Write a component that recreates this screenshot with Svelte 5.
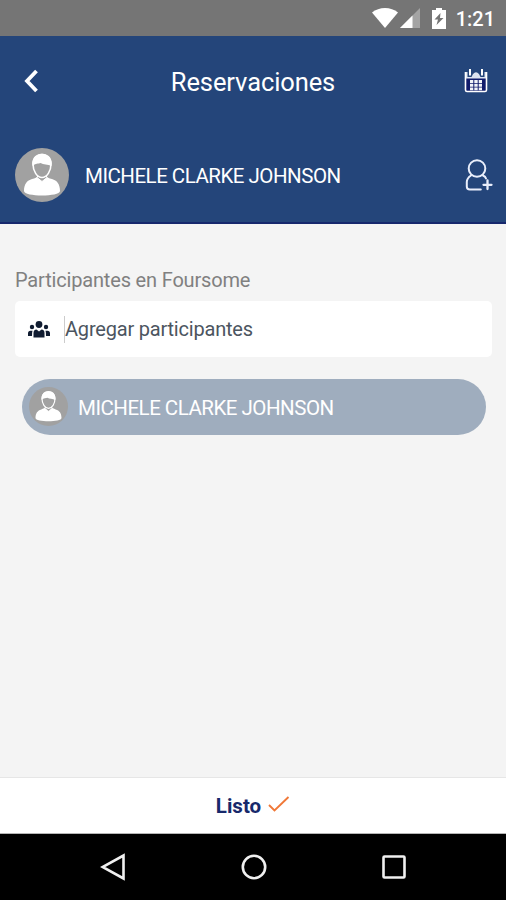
<script lang="ts">
  let title = 'Reservaciones'
  let user = 'MICHELE CLARKE JOHNSON'
  let participants = $state([user])
</script>

{#snippet avatar()}
  <svg class="avatar" viewBox="0 0 54 54">
    <circle cx="27" cy="27" r="27" fill="#a1a1a1" />
    <path d="M9 43c0-7 3-10.500 8-12 3-.8 5-1.500 6.500-3.500h7c1.500 2 3.500 2.700 6.500 3.500 5 1.500 8 5 8 12 0 6-36 6-36 0z" fill="#fff" />
    <path d="M23.500 26.500l-1.500 3 5 4 5-4-1.500-3z" fill="#a1a1a1" stroke="#fff" stroke-width="1" />
    <path d="M18 16c0-13 18-13 18 0 0 7-4 13.500-9 13.500S18 23 18 16z" fill="#a1a1a1" stroke="#fff" stroke-width="1.600" />
    <path d="M17.500 18C15 2 39 2 36.500 18c-4-2-8-1-11-3-2 1-5 0-8 3z" fill="#fff" />
  </svg>
{/snippet}

<div class="screen">
  <div class="status">
    <svg class="wifi" width="26" height="20" viewBox="0 0 26 20">
      <path d="M0 4.500C7-1.500 19-1.500 26 4.500L13 20z" fill="#fff" />
    </svg>
    <svg class="signal" width="20" height="20" viewBox="0 0 20 20">
      <path d="M20 0v20H0z" fill="#a4a4a4" />
      <path d="M12.500 7.500V20H0z" fill="#fff" />
    </svg>
    <svg class="battery" width="14" height="21" viewBox="0 0 14 21">
      <path d="M4 0h6v2h4v19H0V2h4z" fill="#fff" />
      <path d="M8.500 5l-6 6.500H6L4.500 17l7-7H8z" fill="#757575" />
    </svg>
    <span class="clock">1:21</span>
  </div>

  <header>
    <div class="toolbar">
      <svg width="14" height="24" viewBox="0 0 14 24">
        <path d="M12.500 2L3 12l9.500 10" fill="none" stroke="#fff" stroke-width="3.800" />
      </svg>
      <h1>{title}</h1>
      <svg width="24" height="24" viewBox="0 0 24 24">
        <path d="M1 9h22v14H1z" fill="#101b6b" />
        <path d="M1 3h2.500v5h4L9 5q3-3.500 6 0l1.500 3h4V3H23v6.500H1z" fill="#dce3f0" />
        <path d="M1.500 3v18q0 1.500 1.500 1.500h18q1.500 0 1.500-1.500V3" fill="none" stroke="#fff" stroke-width="1.600" />
        <path d="M6 0v6.500M18 0v6.500" stroke="#fff" stroke-width="2" />
        <path d="M6 11h3.300v3H6zM10.300 11h3.400v3h-3.400zM14.700 11H18v3h-3.300zM6 14.800h3.300v3H6zM10.300 14.800h3.400v3h-3.400zM14.700 14.800H18v3h-3.300zM6 18.600h3.300v2.600H6zM10.300 18.600h3.400v2.600h-3.400zM14.700 18.600H18v2.600h-3.300z" fill="#f3f5fa" />
      </svg>
    </div>
    <div class="user">
      {@render avatar()}
      <span class="name">{user}</span>
      <svg width="28" height="33" viewBox="0 0 28 33">
        <g fill="none" stroke="#e9eefb" stroke-width="2" stroke-linecap="round">
          <circle cx="12" cy="9.500" r="8.300" />
          <path d="M6 16.500C3 18.500 1.800 20 1.800 23v4.500q0 3 3 3h11M18 16.500q2.500 1 3 3" />
          <path d="M22.500 21.500v8.500M18.500 25.800h8" stroke-width="2.300" />
        </g>
      </svg>
    </div>
  </header>

  <main>
    <p class="label">Participantes en Foursome</p>
    <div class="field">
      <svg width="22" height="17" viewBox="0 0 22 17" fill="#101c31">
        <circle cx="11" cy="3.500" r="3.400" />
        <circle cx="4" cy="6" r="2.200" />
        <circle cx="18" cy="6" r="2.200" />
        <path d="M5.500 16.500V12q0-3.500 3-3.500l2.500 2 2.500-2q3 0 3 3.500v4.500zM0 15v-2.500q0-2.700 2.500-2.700h2Q4 11 4 15zM22 15v-2.500q0-2.700-2.500-2.700h-2Q18 11 18 15z" />
      </svg>
      <span class="placeholder">Agregar participantes</span>
    </div>
    {#each participants as participant}
      <div class="chip">
        {@render avatar()}
        <span>{participant}</span>
      </div>
    {/each}
  </main>

  <div class="done">
    <span>Listo</span>
    <svg width="22" height="17" viewBox="0 0 22 17">
      <path d="M1 9L6.500 14.500 20.500 1" fill="none" stroke="#f07838" stroke-width="1.900" />
    </svg>
  </div>

  <nav>
    <svg width="26" height="28" viewBox="0 0 26 28">
      <path d="M23.500 2.500v23L2.500 14z" />
    </svg>
    <svg width="26" height="28" viewBox="0 0 26 28">
      <circle cx="13" cy="14" r="11.200" />
    </svg>
    <svg width="26" height="28" viewBox="0 0 26 28">
      <rect x="2.500" y="3.500" width="21" height="21" rx="1" />
    </svg>
  </nav>
</div>

<style>
  :global(body) {
    margin: 0;
  }
  .screen {
    display: flex;
    flex-direction: column;
    height: 900px;
    background: #f4f4f4;
    font-family: Roboto, sans-serif;
  }
  svg {
    display: block;
    flex: none;
  }
  .status {
    display: flex;
    align-items: center;
    justify-content: flex-end;
    box-sizing: border-box;
    height: 36px;
    padding-right: 11px;
    background: #757575;
    color: #fff;
  }
  .signal {
    margin-left: 2px;
  }
  .battery {
    margin: 0 10px 0 12px;
  }
  .clock {
    padding-top: 2px;
    font-size: 20px;
    font-weight: 500;
    line-height: 34px;
  }
  header {
    box-sizing: border-box;
    height: 188px;
    background: #24457a;
    border-bottom: 2px solid #17286d;
    color: #fff;
  }
  .toolbar {
    display: flex;
    align-items: center;
    height: 90px;
    padding: 0 18px 0 24px;
  }
  h1 {
    flex: 1;
    margin: 2px 0 0 4px;
    font-size: 25.5px;
    font-weight: 400;
    letter-spacing: -0.1px;
    text-align: center;
  }
  .user {
    display: flex;
    align-items: center;
    height: 98px;
    padding: 0 13px 0 15px;
  }
  .user .avatar {
    width: 54px;
    height: 54px;
  }
  .name {
    flex: 1;
    margin-left: 16px;
    padding-top: 1px;
    font-size: 20.5px;
    letter-spacing: -0.5px;
  }
  main {
    flex: 1;
    padding: 43px 14px 0 15px;
  }
  .label {
    margin: 0;
    color: #808080;
    font-size: 20px;
    letter-spacing: -0.17px;
    line-height: 27px;
  }
  .field {
    display: flex;
    align-items: center;
    height: 56px;
    margin-top: 7px;
    padding-left: 13px;
    background: #fff;
    border-radius: 5px;
  }
  .placeholder {
    margin-left: 14px;
    border-left: 1px solid #ccc;
    color: #4c5560;
    font-size: 20px;
    letter-spacing: -0.2px;
    line-height: 27px;
  }
  .chip {
    display: flex;
    align-items: center;
    height: 56px;
    margin: 22px 6px 0 7px;
    padding-left: 7px;
    border-radius: 28px;
    background: #9fadbe;
    color: #fff;
    font-size: 20.5px;
    letter-spacing: -0.5px;
  }
  .chip .avatar {
    width: 39px;
    height: 39px;
    margin: 0 10px 2px 0;
  }
  .chip span {
    padding-top: 2px;
  }
  .done {
    display: flex;
    align-items: center;
    justify-content: center;
    gap: 7px;
    box-sizing: border-box;
    height: 57px;
    background: #fff;
    border-top: 1px solid #e6e6e6;
    border-bottom: 1px solid #b5b5b5;
    color: #17296b;
    font-size: 20.5px;
    font-weight: 700;
  }
  .done svg {
    margin-bottom: 2px;
  }
  nav {
    display: flex;
    justify-content: space-between;
    align-items: center;
    box-sizing: border-box;
    height: 66px;
    padding: 0 99px 0 100px;
    background: #000;
    fill: none;
    stroke: #f0f0f0;
    stroke-width: 2.6;
  }
</style>
